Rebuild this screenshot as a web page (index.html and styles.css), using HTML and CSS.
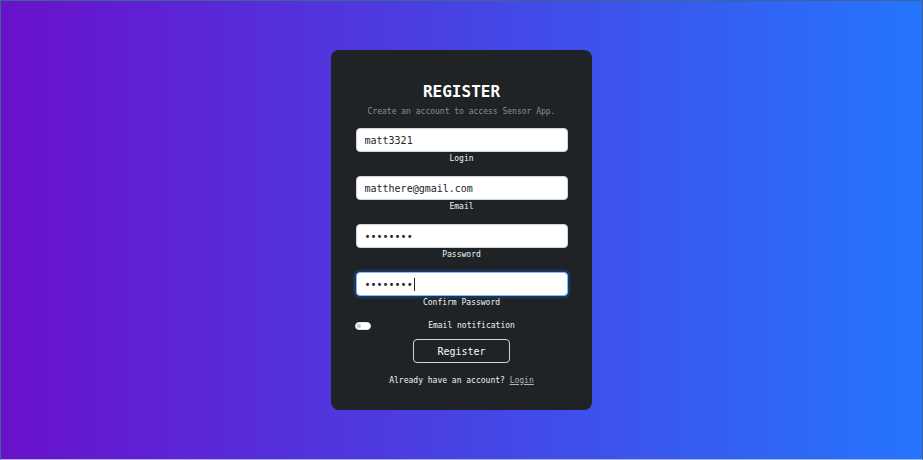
FILE: index.html
```html
<!DOCTYPE html>
<html lang="en">
<head>
<meta charset="utf-8">
<title>Register</title>
<link rel="stylesheet" href="styles.css">
</head>
<body>
<div class="page">
  <form class="card">
    <h1 class="title">REGISTER</h1>
    <p class="subtitle">Create an account to access Sensor App.</p>
    <div class="field">
      <input class="input" type="text" value="matt3321">
      <label class="label">Login</label>
    </div>
    <div class="field">
      <input class="input" type="email" value="matthere@gmail.com">
      <label class="label">Email</label>
    </div>
    <div class="field">
      <input class="input" type="password" value="password">
      <label class="label">Password</label>
    </div>
    <div class="field">
      <div class="input input-focus"><span class="dots">••••••••</span><span class="caret"></span></div>
      <label class="label">Confirm Password</label>
    </div>
    <div class="switch-row">
      <span class="switch"><span class="knob"></span></span>
      <span class="switch-label">Email notification</span>
    </div>
    <div class="actions">
      <button class="btn" type="button">Register</button>
    </div>
    <p class="footer">Already have an account? <a class="link" href="#">Login</a></p>
  </form>
</div>
</body>
</html>
```
FILE: styles.css
```css
* { box-sizing: border-box; }
html, body { margin: 0; padding: 0; }
body { font-family: "DejaVu Sans Mono", "Liberation Mono", monospace; }
.page {
  width: 923px;
  height: 460px;
  border: 1px solid #3d639c;
  border-bottom-color: #a9b8ec;
  background: linear-gradient(to right, #6a11cb, #2575fc);
  display: flex;
  align-items: center;
  justify-content: center;
}
.card {
  width: 261px;
  height: 360px;
  background: #1f2326;
  border-radius: 8px;
  padding: 32px 24px 0;
  display: flex;
  flex-direction: column;
  color: #f8f9fa;
}
.title {
  margin: 0;
  font-size: 16px;
  line-height: 20px;
  font-weight: bold;
  text-align: center;
  color: #fff;
}
.subtitle {
  margin: 5px 0 0;
  font-size: 8px;
  line-height: 10px;
  text-align: center;
  color: #8a8f94;
}
.field {
  margin-top: 11px;
  display: flex;
  flex-direction: column;
  align-items: center;
}
.field + .field { margin-top: 12px; }
.input {
  width: 212px;
  height: 24px;
  border: 1px solid #ced4da;
  border-radius: 4px;
  background: #fff;
  padding: 0 8px;
  font-family: inherit;
  font-size: 10px;
  color: #212529;
  outline: none;
}
.input-focus {
  display: flex;
  align-items: center;
  border-color: #86b7fe;
  box-shadow: 0 0 0 2.5px rgba(13, 110, 253, 0.25);
}
.dots { font-size: 10px; letter-spacing: 0; }
.caret {
  width: 1px;
  height: 13px;
  background: #212529;
  margin-left: 1px;
}
.label {
  margin-top: 2px;
  font-size: 8px;
  line-height: 10px;
  color: #f1f3f5;
}
.switch-row {
  margin-top: 13px;
  display: flex;
  align-items: center;
}
.switch {
  position: relative;
  width: 16px;
  height: 8px;
  border-radius: 4px;
  background: #fff;
  border: 1px solid #dee2e6;
}
.knob {
  position: absolute;
  left: 1px;
  top: 1px;
  width: 4px;
  height: 4px;
  border-radius: 50%;
  background: #c4c8cc;
}
.switch-label {
  flex: 1;
  text-align: center;
  font-size: 8px;
  line-height: 10px;
  color: #f1f3f5;
  padding-left: 4px;
}
.actions {
  margin-top: 8px;
  display: flex;
  justify-content: center;
}
.btn {
  width: 97px;
  height: 24px;
  background: transparent;
  border: 1px solid #ced4da;
  border-radius: 4px;
  color: #f8f9fa;
  font-family: inherit;
  font-size: 10px;
  padding: 0;
}
.footer {
  margin: 13px 0 0;
  font-size: 8px;
  line-height: 10px;
  text-align: center;
  color: #f1f3f5;
}
.link { color: #adb5bd; }
```
